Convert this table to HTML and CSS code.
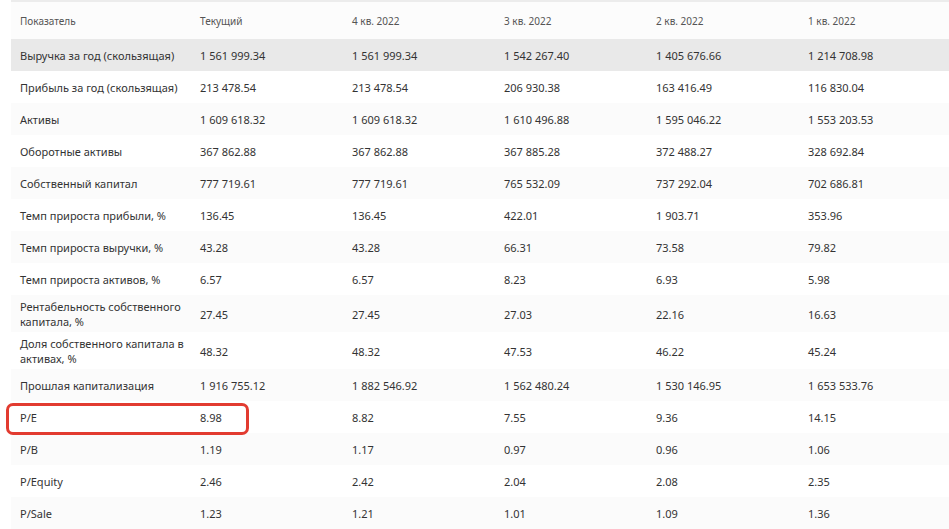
FILE: index.html
```html
<!DOCTYPE html>
<html lang="ru">
<head>
<meta charset="utf-8">
<title>Показатели</title>
<link rel="stylesheet" href="styles.css">
</head>
<body>
<div class="wrap">
<table class="fin">
<colgroup><col class="c-label"><col class="c-val"><col class="c-val"><col class="c-val"><col class="c-val"><col class="c-val"></colgroup>
<thead>
<tr><th>Показатель</th><th>Текущий</th><th>4 кв. 2022</th><th>3 кв. 2022</th><th>2 кв. 2022</th><th>1 кв. 2022</th></tr>
</thead>
<tbody>
<tr class="hover"><td>Выручка за год (скользящая)</td><td>1 561 999.34</td><td>1 561 999.34</td><td>1 542 267.40</td><td>1 405 676.66</td><td>1 214 708.98</td></tr>
<tr><td>Прибыль за год (скользящая)</td><td>213 478.54</td><td>213 478.54</td><td>206 930.38</td><td>163 416.49</td><td>116 830.04</td></tr>
<tr><td>Активы</td><td>1 609 618.32</td><td>1 609 618.32</td><td>1 610 496.88</td><td>1 595 046.22</td><td>1 553 203.53</td></tr>
<tr><td>Оборотные активы</td><td>367 862.88</td><td>367 862.88</td><td>367 885.28</td><td>372 488.27</td><td>328 692.84</td></tr>
<tr><td>Собственный капитал</td><td>777 719.61</td><td>777 719.61</td><td>765 532.09</td><td>737 292.04</td><td>702 686.81</td></tr>
<tr><td>Темп прироста прибыли, %</td><td>136.45</td><td>136.45</td><td>422.01</td><td>1 903.71</td><td>353.96</td></tr>
<tr><td>Темп прироста выручки, %</td><td>43.28</td><td>43.28</td><td>66.31</td><td>73.58</td><td>79.82</td></tr>
<tr><td>Темп прироста активов, %</td><td>6.57</td><td>6.57</td><td>8.23</td><td>6.93</td><td>5.98</td></tr>
<tr class="two"><td>Рентабельность собственного<br>капитала, %</td><td>27.45</td><td>27.45</td><td>27.03</td><td>22.16</td><td>16.63</td></tr>
<tr class="two"><td>Доля собственного капитала в<br>активах, %</td><td>48.32</td><td>48.32</td><td>47.53</td><td>46.22</td><td>45.24</td></tr>
<tr><td>Прошлая капитализация</td><td>1 916 755.12</td><td>1 882 546.92</td><td>1 562 480.24</td><td>1 530 146.95</td><td>1 653 533.76</td></tr>
<tr><td>P/E</td><td>8.98</td><td>8.82</td><td>7.55</td><td>9.36</td><td>14.15</td></tr>
<tr><td>P/B</td><td>1.19</td><td>1.17</td><td>0.97</td><td>0.96</td><td>1.06</td></tr>
<tr><td>P/Equity</td><td>2.46</td><td>2.42</td><td>2.04</td><td>2.08</td><td>2.35</td></tr>
<tr><td>P/Sale</td><td>1.23</td><td>1.21</td><td>1.01</td><td>1.09</td><td>1.36</td></tr>
</tbody>
</table>
<div class="highlight"></div>
</div>
</body>
</html>
```
FILE: styles.css
```css
html, body {
  margin: 0;
  padding: 0;
  background: #ffffff;
  overflow: hidden;
}
.wrap {
  position: relative;
  width: 949px;
  height: 529px;
  overflow: hidden;
}
.fin {
  margin-left: 11px;
  width: 940px;
  border-collapse: collapse;
  table-layout: fixed;
  font-family: "Noto Sans", "Open Sans", sans-serif;
  font-size: 11px;
  color: #333333;
}
.c-label { width: 180px; }
.c-val { width: 152px; }
.fin thead tr {
  background: #fcfcfc;
  border-top: 2px solid #ececec;
}
.fin th {
  height: 37px;
  padding: 0 9px;
  font-weight: normal;
  font-size: 10px;
  color: #555555;
  text-align: left;
  vertical-align: middle;
  white-space: nowrap;
}
.fin td {
  height: 26px;
  padding: 3px 9px;
  line-height: 15px;
  text-align: left;
  vertical-align: middle;
  white-space: nowrap;
}
.fin tr.two td {
  padding: 4px 9px 3px;
}
.fin tbody tr:nth-child(odd) { background: #fbfbfb; }
.fin tbody tr:nth-child(even) { background: #ffffff; }
.fin tbody tr.hover { background: #e9e9e9; }
.highlight {
  position: absolute;
  left: 6px;
  top: 403px;
  width: 237px;
  height: 26px;
  border: 3px solid #e23b30;
  border-radius: 7px;
}
```
